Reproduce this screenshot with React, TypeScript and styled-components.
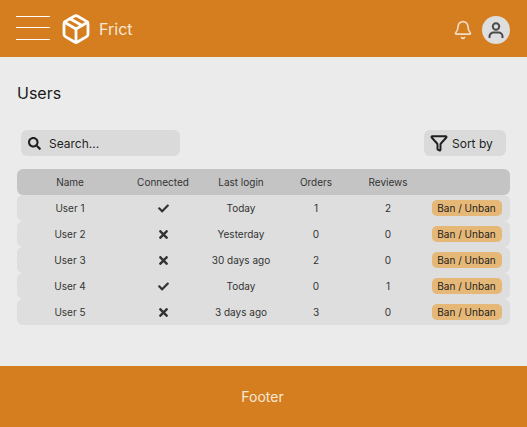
import React from 'react';
import styled, { createGlobalStyle } from 'styled-components';
import { Bell, Funnel, Package } from 'lucide-react';
import { FaCheck, FaSearch, FaTimes } from 'react-icons/fa';

const GlobalStyle = createGlobalStyle`
  html, body {
    margin: 0;
    padding: 0;
    background: #ebebeb;
    font-family: Inter, "Liberation Sans", sans-serif;
  }
`;

const Page = styled.div`
  width: 527px;
  height: 427px;
  display: flex;
  flex-direction: column;
  overflow: hidden;
`;

const Header = styled.header`
  height: 57px;
  background: #d57e1f;
  display: flex;
  align-items: center;
  padding: 0 17px 0 16px;
`;

const MenuButton = styled.div`
  width: 34px;
  height: 24px;
  margin-bottom: 1.8px;
  display: flex;
  flex-direction: column;
  justify-content: space-between;
  margin-right: 10px;
`;

const MenuLine = styled.span`
  height: 1px;
  background: #fff;
`;

const Brand = styled.div`
  display: flex;
  align-items: center;
  gap: 7px;
  color: #f8e8d6;
  font-size: 16px;
  flex: 1;
`;

const HeaderIcons = styled.div`
  display: flex;
  align-items: center;
  gap: 9px;
  margin-top: 3px;
  color: #f2dcc3;
`;

const Avatar = styled.div`
  width: 28px;
  height: 28px;
  border-radius: 50%;
  background: #dedede;
  color: #4a4a4a;
  display: flex;
  align-items: center;
  justify-content: center;
`;

const Main = styled.main`
  flex: 1;
  padding: 27px 17px 0;
`;

const Title = styled.h1`
  margin: 0;
  font-size: 16px;
  line-height: 19px;
  font-weight: 400;
  color: #1a1a1a;
`;

const Toolbar = styled.div`
  display: flex;
  justify-content: space-between;
  margin: 27px 4px 13px;
`;

const ToolBox = styled.div<{ $width: number; $inset: number; $gap: number }>`
  width: ${p => p.$width}px;
  height: 26px;
  box-sizing: border-box;
  border-radius: 6px;
  background: #dadada;
  display: flex;
  align-items: center;
  padding-left: ${p => p.$inset}px;
  gap: ${p => p.$gap}px;
  font-size: 12px;
  color: #1f1f1f;
`;

const Table = styled.div`
  display: flex;
  flex-direction: column;
`;

const Row = styled.div<{ $head?: boolean }>`
  height: 26px;
  display: grid;
  grid-template-columns: 106px 80px 76px 74px 70px 87px;
  align-items: center;
  justify-items: center;
  border-radius: 6px;
  background: ${p => (p.$head ? '#c4c4c4' : '#dedede')};
  font-size: 10px;
  color: #333;
`;

const BanButton = styled.div`
  width: 70px;
  height: 16px;
  border-radius: 5px;
  background: #e6b877;
  color: #222;
  display: flex;
  align-items: center;
  justify-content: center;
  white-space: nowrap;
`;

const Footer = styled.footer`
  height: 61px;
  padding-right: 2px;
  background: #d57e1f;
  color: #f8e8d6;
  font-size: 14px;
  display: flex;
  align-items: center;
  justify-content: center;
`;

const users = [
  { name: 'User 1', connected: true, login: 'Today', orders: 1, reviews: 2 },
  { name: 'User 2', connected: false, login: 'Yesterday', orders: 0, reviews: 0 },
  { name: 'User 3', connected: false, login: '30 days ago', orders: 2, reviews: 0 },
  { name: 'User 4', connected: true, login: 'Today', orders: 0, reviews: 1 },
  { name: 'User 5', connected: false, login: '3 days ago', orders: 3, reviews: 0 },
];

const App: React.FC = () => (
  <Page>
    <GlobalStyle />
    <Header>
      <MenuButton>
        <MenuLine />
        <MenuLine />
        <MenuLine />
      </MenuButton>
      <Brand>
        <Package size={32} strokeWidth={2.1} color="#fff" />
        Frict
      </Brand>
      <HeaderIcons>
        <Bell size={20} strokeWidth={2} />
        <Avatar>
          <svg width="20" height="20" viewBox="0 0 20 20" fill="none" stroke="currentColor" strokeWidth="2">
            <circle cx="10" cy="6.5" r="3.2" />
            <path d="M3.5 18v-1.5a4 4 0 0 1 4-4h5a4 4 0 0 1 4 4V18" />
          </svg>
        </Avatar>
      </HeaderIcons>
    </Header>
    <Main>
      <Title>Users</Title>
      <Toolbar>
        <ToolBox $width={159} $inset={7} $gap={8}>
          <FaSearch size={13} />
          Search...
        </ToolBox>
        <ToolBox $width={82} $inset={6} $gap={4}>
          <Funnel size={18} strokeWidth={2.6} />
          Sort by
        </ToolBox>
      </Toolbar>
      <Table>
        <Row $head>
          <span>Name</span>
          <span>Connected</span>
          <span>Last login</span>
          <span>Orders</span>
          <span>Reviews</span>
          <span />
        </Row>
        {users.map(user => (
          <Row key={user.name}>
            <span>{user.name}</span>
            {user.connected ? <FaCheck size={11} /> : <FaTimes size={13} />}
            <span>{user.login}</span>
            <span>{user.orders}</span>
            <span>{user.reviews}</span>
            <BanButton>Ban / Unban</BanButton>
          </Row>
        ))}
      </Table>
    </Main>
    <Footer>Footer</Footer>
  </Page>
);

export default App;
